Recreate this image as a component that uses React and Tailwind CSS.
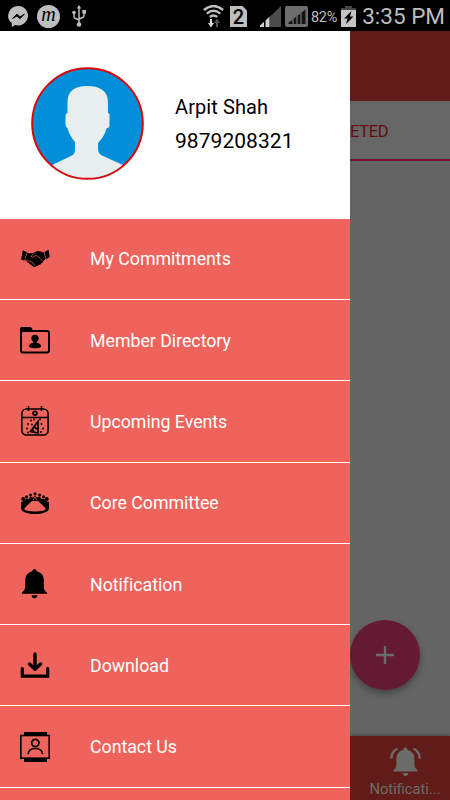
const HandshakeIcon = () => (
  <svg viewBox="0 0 30 20" className="w-[30px] h-5">
    <path d="M2.900 1.300l4 2-2.600 8.200L1 10.500zM24.500 3l4-2.300L29.700 8l-3.500 2.200z" />
    <path d="M7.500 3.700q3.500 1 6 .3Q16 2 18 2l5.700 1.300 2 6.400-2.700 2.500q.3 1.800-1.700 2-.5 1.700-2.300 1.500-.8 1.600-2.500 1.300-1.700 1.800-4 .2l-5-4.200-2.500-2z" />
    <path d="M13.800 4.500L11 7.500q1.500 2 4-.7l1.800-.2 5.700 5M6 11.500q1.500-.9 2.500.5 2-.6 2.600 1 1.900-.2 2 1.500 1.700.3 1.200 2" fill="none" stroke="#ee635b" strokeWidth="0.700" />
  </svg>
);

const FolderIcon = () => (
  <svg viewBox="0 0 30 27" className="w-[30px] h-[27px]">
    <path d="M0 4.500V2Q0 0 2 0h8q1.500 0 2.200 1.800L13 4.500H0z" />
    <rect x="1" y="4" width="28" height="21.500" rx="2" fill="none" stroke="#000" strokeWidth="2" />
    <circle cx="15" cy="11.300" r="3.600" />
    <path d="M13.300 13h3.400v2.800q4.300 1 4.300 3.400c0 2.600-12 2.600-12 0q0-2.400 4.300-3.400z" />
  </svg>
);

const EventsIcon = () => (
  <svg viewBox="0 0 28 30" className="w-7 h-[30px]" fill="none" stroke="#000" strokeWidth="1.500">
    <rect x="0.900" y="3" width="26.200" height="26" rx="4.500" />
    <path d="M1 11.500h26M7.500 0v5M20.500 0v5" />
    <circle cx="14" cy="7.300" r="1.900" strokeWidth="1.700" />
    <path d="M17 15.500L9.500 25.500 17 27zM13 21l4 2.500M11.500 23.500l2 3" strokeWidth="1.700" />
    <path
      d="M10 14.500v.1M13 13.500v.1M19 13.500v.1M7 18v.1M20.500 18v.1M22 22.500v.1M6 22.500v.1M7 26.500v.1M20 26v.1M11 18.500v.1"
      strokeWidth="1.900"
      strokeLinecap="round"
    />
  </svg>
);

const CommitteeIcon = () => (
  <svg viewBox="0 0 28 22" className="w-7 h-[22px]">
    <circle cx="2.200" cy="7" r="1.900" />
    <circle cx="5.500" cy="4.800" r="1.500" />
    <circle cx="9.500" cy="3" r="1.500" />
    <circle cx="14" cy="1.800" r="1.600" />
    <circle cx="18.500" cy="3" r="1.500" />
    <circle cx="22.500" cy="4.800" r="1.500" />
    <circle cx="25.800" cy="7" r="1.900" />
    <path d="M0 10l3-1 2-2.500 3 .5 1-2.500 3 1 2-1.700 2 1.700 3-1L20 7l3-.5 2 2.500 3 1v6c0 8-28 8-28 0z" />
    <path d="M11 9h6l7 6.500q1.500 2.200-1 3-9 1.900-18 0-2.500-.8-1-3z" fill="#ee635b" />
    <path d="M12.300 8L14 4.700 15.700 8" fill="none" stroke="#ee635b" strokeWidth="0.700" />
  </svg>
);

const BellShape = () => (
  <>
    <path d="M12.500 0q2 0 2.200 2.300Q21.500 4 21.800 11v7q.1 3.500 3.200 5.500v1.200H0v-1.200Q3.100 21.500 3.200 18v-7Q3.500 4 10.300 2.300 10.500 0 12.500 0z" />
    <path d="M9.500 26.300h6q-.5 3-3 3t-3-3z" />
  </>
);

const BellIcon = () => (
  <svg viewBox="0 0 25 30" className="w-[25px] h-[30px] mr-px">
    <BellShape />
  </svg>
);

const DownloadIcon = () => (
  <svg viewBox="0 0 30 26" className="w-[30px] h-[26px]" fill="none" stroke="#000" strokeWidth="3.400" strokeLinecap="round" strokeLinejoin="round">
    <path d="M15 2v14M9.500 12l5.500 5.200L20.500 12" />
    <path d="M2.300 16.500v7.700h25.400v-7.700" strokeWidth="3.200" strokeLinejoin="miter" />
  </svg>
);

const ContactIcon = () => (
  <svg viewBox="0 0 30 30" className="w-[30px] h-[30px]">
    <path d="M4 0h23v3.500H4zM4 26.500h23V30H4z" />
    <rect x="0.800" y="3.500" width="28.400" height="22.700" fill="none" stroke="#000" strokeWidth="1.600" />
    <circle cx="15.300" cy="11" r="3.600" fill="none" stroke="#000" strokeWidth="1.700" />
    <path d="M8 22.300q.5-5.800 7.300-5.800t7.300 5.800" fill="none" stroke="#000" strokeWidth="1.700" />
  </svg>
);

const menuItems = [
  { label: "My Commitments", Icon: HandshakeIcon },
  { label: "Member Directory", Icon: FolderIcon },
  { label: "Upcoming Events", Icon: EventsIcon },
  { label: "Core Committee", Icon: CommitteeIcon },
  { label: "Notification", Icon: BellIcon },
  { label: "Download", Icon: DownloadIcon },
  { label: "Contact Us", Icon: ContactIcon },
];

const StatusBar = () => (
  <header className="h-[31px] shrink-0 bg-black text-[#bebebe] flex items-center pl-2 pr-[5px] pt-[1px]">
    {/* Messenger */}
    <svg viewBox="0 0 21 21" className="w-[21px] h-[21px] shrink-0">
      <path d="M10.500 0a10 9.700 0 1 1-3.300 19L3.800 21v-3.900A10 9.700 0 0 1 10.500 0z" fill="#bebebe" />
      <path d="M4.500 12.500L9 8l3 2.800L16.500 8 12 12.800 9 10z" fill="#000" stroke="#000" strokeWidth="0.800" />
    </svg>
    <div className="ml-2 w-[23px] h-[23px] shrink-0 rounded-full bg-[#bebebe] text-black flex items-center justify-center font-['Liberation_Serif',serif] italic text-[20px] leading-none pb-[4px]">
      m
    </div>
    {/* USB */}
    <svg viewBox="0 0 14 22" className="ml-[12px] w-[14px] h-[22px] shrink-0" fill="none" stroke="#bebebe" strokeWidth="1.500">
      <path d="M7 2v17M2 8v3.500q0 1.500 1.500 2L7 15M12 7v3.500q0 1.500-1.500 2L7 14" />
      <path d="M4.800 3.500L7 0l2.200 3.500z" fill="#bebebe" stroke="none" />
      <circle cx="2" cy="7.500" r="1.800" fill="#bebebe" stroke="none" />
      <path d="M10.300 5H14v3.700h-3.700z" fill="#bebebe" stroke="none" />
      <circle cx="7" cy="19.500" r="2.300" fill="#bebebe" stroke="none" />
    </svg>

    <div className="ml-[117px] flex items-center shrink-0">
      {/* Wi-Fi */}
      <svg viewBox="0 0 21 23" className="w-[21px] h-[23px]" fill="none" stroke="#bebebe" strokeWidth="2.400">
        <path d="M.800 5Q10.500-3 20.200 5M3.800 8.600q6.700-5.600 13.400 0M6.800 12q3.700-3 7.400 0" />
        <path d="M7 14h2v4h2l-3 4.500L5 18h2z" fill="#d8d8d8" stroke="none" />
        <path d="M13 22h2v-4h2l-3-4.500-3 4.500h2z" fill="#555" stroke="none" />
      </svg>
      <svg viewBox="0 0 17 21" className="ml-[6px] w-[17px] h-[21px]">
        <path d="M0 0h12.500L17 4.500V21H0z" fill="#bebebe" />
        <text x="8.500" y="17.500" textAnchor="middle" fontFamily="Roboto, sans-serif" fontWeight="500" fontSize="20">2</text>
      </svg>
      <svg viewBox="0 0 21 21" className="ml-[13px] w-[21px] h-[21px]">
        <path d="M10 21V10.500L21 0v21z" fill="#4c4c4c" />
        <path d="M0 21v-1.500l4-3.800V21zM5.500 21v-6.500L9.500 10.500V21z" fill="#d0d0d0" />
      </svg>
      <svg viewBox="0 0 23 21" className="ml-1 w-[23px] h-[21px]">
        <rect width="23" height="21" rx="2" fill="#6e6e6e" />
        <path d="M3.500 18v-1.300L20.500 3.500V18z" fill="#141414" />
        <path d="M8 13v5M12 10v8M16 7v11" stroke="#777" strokeWidth="1.200" />
      </svg>
      <span className="ml-[3px] w-[28px] whitespace-nowrap text-[14.500px] leading-[20px] pt-[3px] tracking-[-0.3px]">82%</span>
      <svg viewBox="0 0 15 21" className="ml-[2px] w-[15px] h-[21px]">
        <path d="M4 0h7v2h4v4H0V2h4z" fill="#444" />
        <path d="M0 4h15v17H0z" fill="#c4c4c4" />
        <path d="M10.500 5L3 12.500h3.500L5 18l7.500-7.500H9z" fill="#000" />
      </svg>
    </div>
    <time className="ml-auto whitespace-nowrap text-[22.500px] leading-none">3:35 PM</time>
  </header>
);

const Drawer = () => (
  <aside className="w-[350px] shrink-0 h-full overflow-hidden bg-white flex flex-col">
    <div className="h-[187.700px] shrink-0 flex items-center pl-[31px] pb-[2px]">
      <svg viewBox="0 0 113 113" className="w-[113px] h-[113px] shrink-0">
        <defs>
          <clipPath id="avatar">
            <circle cx="56.500" cy="56.500" r="55" />
          </clipPath>
        </defs>
        <circle cx="56.500" cy="56.500" r="55.500" fill="#008fd8" />
        <path
          clipPath="url(#avatar)"
          d="M56.500 19C70 19 77 25 77 35v11q2 0 1.500 5v7q0 3-3 3.500-1.500 7-8.500 14.500v6q0 4.500 4 6.500L94 99v14H19V99l22-10.500q3-2 3-6V75q-6-7-7.500-14-2-1-2-4v-7q0-4 2-4V35q0-16 20-16z"
          fill="#e8eeee"
        />
        <circle cx="56.500" cy="56.500" r="55.300" fill="none" stroke="#d90909" strokeWidth="2" />
      </svg>
      <div className="ml-[31px] text-black whitespace-nowrap">
        <p className="text-[20px] leading-[34px] tracking-[0.1px]">Arpit Shah</p>
        <p className="text-[21px] leading-[34px] tracking-[0.050px]">9879208321</p>
      </div>
    </div>
    <nav className="flex-1 bg-[#ee635b]">
      {menuItems.map(({ label, Icon }) => (
        <a key={label} className="h-[81.300px] flex items-center border-b border-white text-white">
          <span className="w-[70px] ml-5 flex text-black">
            <span className="w-[30px] flex justify-center">
              <Icon />
            </span>
          </span>
          <span className="text-[17.800px] tracking-[-0.030px] whitespace-nowrap pt-[2px]">{label}</span>
        </a>
      ))}
    </nav>
  </aside>
);

const DimmedPage = () => (
  <main className="flex-1 min-w-0 bg-[#666] flex flex-col overflow-hidden">
    <div className="h-[70px] bg-[#611b18] shrink-0" />
    <div className="h-[60px] shrink-0 border-b-2 border-[#79103b] flex items-center text-[16.500px] text-[#650b10]">
      <span className="pt-[5px] tracking-[-0.300px]">ETED</span>
    </div>
    <div className="flex-1 bg-[#646464] flex flex-col justify-end pb-[46px]">
      <div className="w-[70px] h-[70px] rounded-full bg-[#651a33] flex items-center justify-center shadow-[0_4px_7px_rgba(0,0,0,0.3)]">
        <svg viewBox="0 0 18 18" className="w-[18px] h-[18px]" stroke="#6b6b6b" strokeWidth="2.400">
          <path d="M9 0v18M0 9h18" />
        </svg>
      </div>
    </div>
    <footer className="h-16 shrink-0 bg-[#611b18] text-[#6b6b6b] flex flex-col items-center shadow-[0_-1px_4px_rgba(0,0,0,0.3)] pl-[10px] pt-[11px]">
      <svg viewBox="0 0 31 29" className="w-[31px] h-[29px] shrink-0" fill="#6b6b6b">
        <g transform="translate(3.300 0.500) scale(0.970)">
          <BellShape />
        </g>
        <path d="M7.500 1.500Q1.500 4.500 1.300 11.500M23.500 1.500q6 3 6.200 10" fill="none" stroke="#6b6b6b" strokeWidth="2.500" />
      </svg>
      <span className="text-[14.700px] leading-[26px] whitespace-nowrap">Notificati...</span>
    </footer>
  </main>
);

export default function App() {
  return (
    <div className="w-[450px] h-[800px] overflow-hidden flex flex-col bg-black font-[Roboto,sans-serif]">
      <StatusBar />
      <div className="flex-1 min-h-0 flex">
        <Drawer />
        <DimmedPage />
      </div>
    </div>
  );
}
